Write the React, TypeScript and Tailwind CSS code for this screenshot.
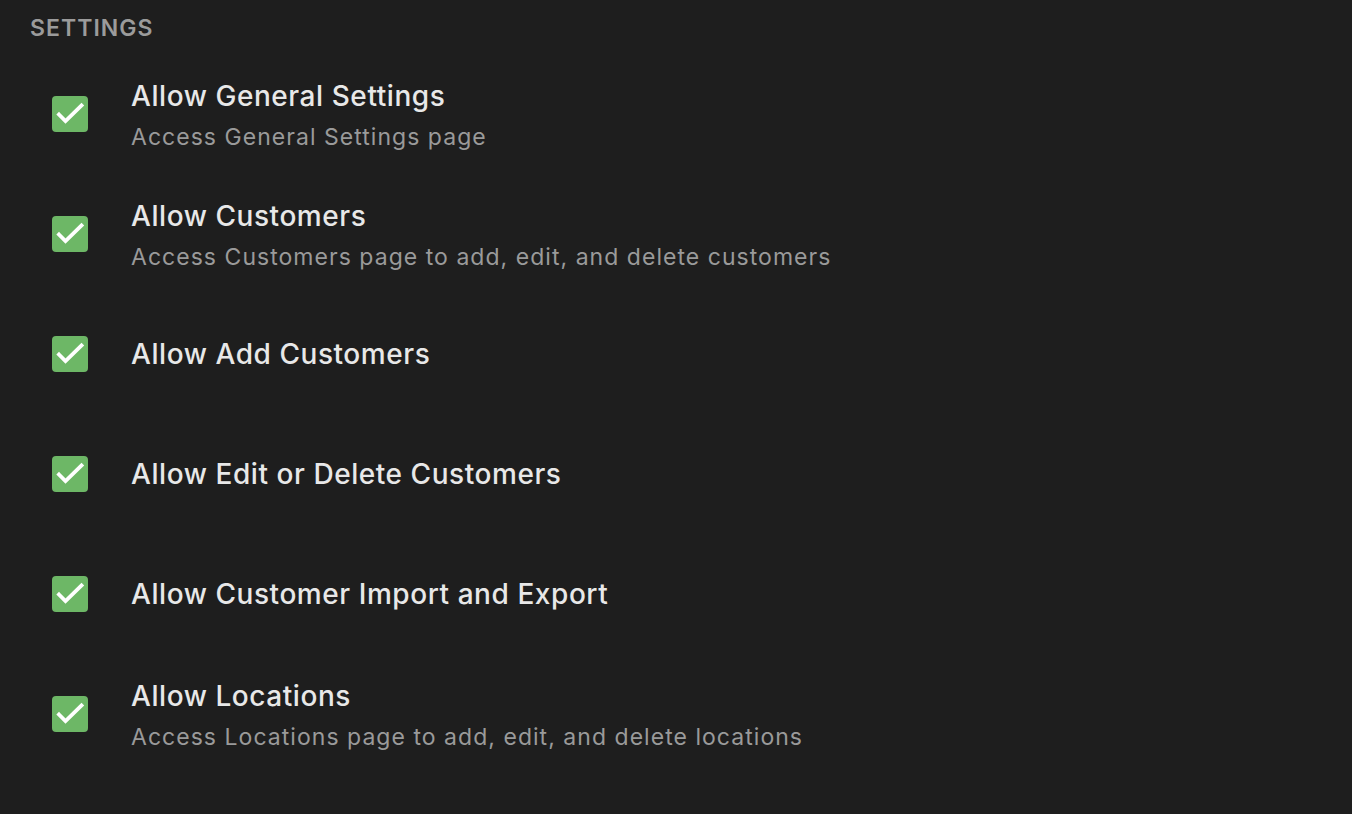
const items = [
  { title: 'Allow General Settings', desc: 'Access General Settings page' },
  { title: 'Allow Customers', desc: 'Access Customers page to add, edit, and delete customers' },
  { title: 'Allow Add Customers' },
  { title: 'Allow Edit or Delete Customers' },
  { title: 'Allow Customer Import and Export' },
  { title: 'Allow Locations', desc: 'Access Locations page to add, edit, and delete locations' },
];

function Check() {
  return (
    <div className="w-9 h-9 rounded-[4px] bg-[#6db766] shrink-0">
      <svg width="36" height="36" viewBox="0 0 36 36" fill="none">
        <path d="M7 18.5 L13.5 25 L29.5 9.5" stroke="white" strokeWidth="3.8" strokeLinecap="square" />
      </svg>
    </div>
  );
}

export default function App() {
  return (
    <div className="min-h-[814px] w-full bg-[#1e1e1e] font-['Inter',sans-serif]">
      <div className="h-[54px] flex items-center pl-[30px] pt-[2px]">
        <h2 className="text-[23px] font-semibold tracking-[0.045em] text-[#9b9b9b] uppercase">Settings</h2>
      </div>
      {items.map((it) => (
        <div key={it.title} className="h-[120px] flex items-center pl-[52px]">
          <Check />
          <div className={`ml-[43px] flex flex-col ${it.desc ? 'pt-[5px]' : ''}`}>
            <div className="text-[28px] leading-[32px] font-medium text-[#e8e8e8] tracking-[0.02em]">{it.title}</div>
            {it.desc && (
              <div className="mt-[9px] text-[23px] leading-[32px] text-[#9a9a9a] tracking-[0.045em]">{it.desc}</div>
            )}
          </div>
        </div>
      ))}
    </div>
  );
}
